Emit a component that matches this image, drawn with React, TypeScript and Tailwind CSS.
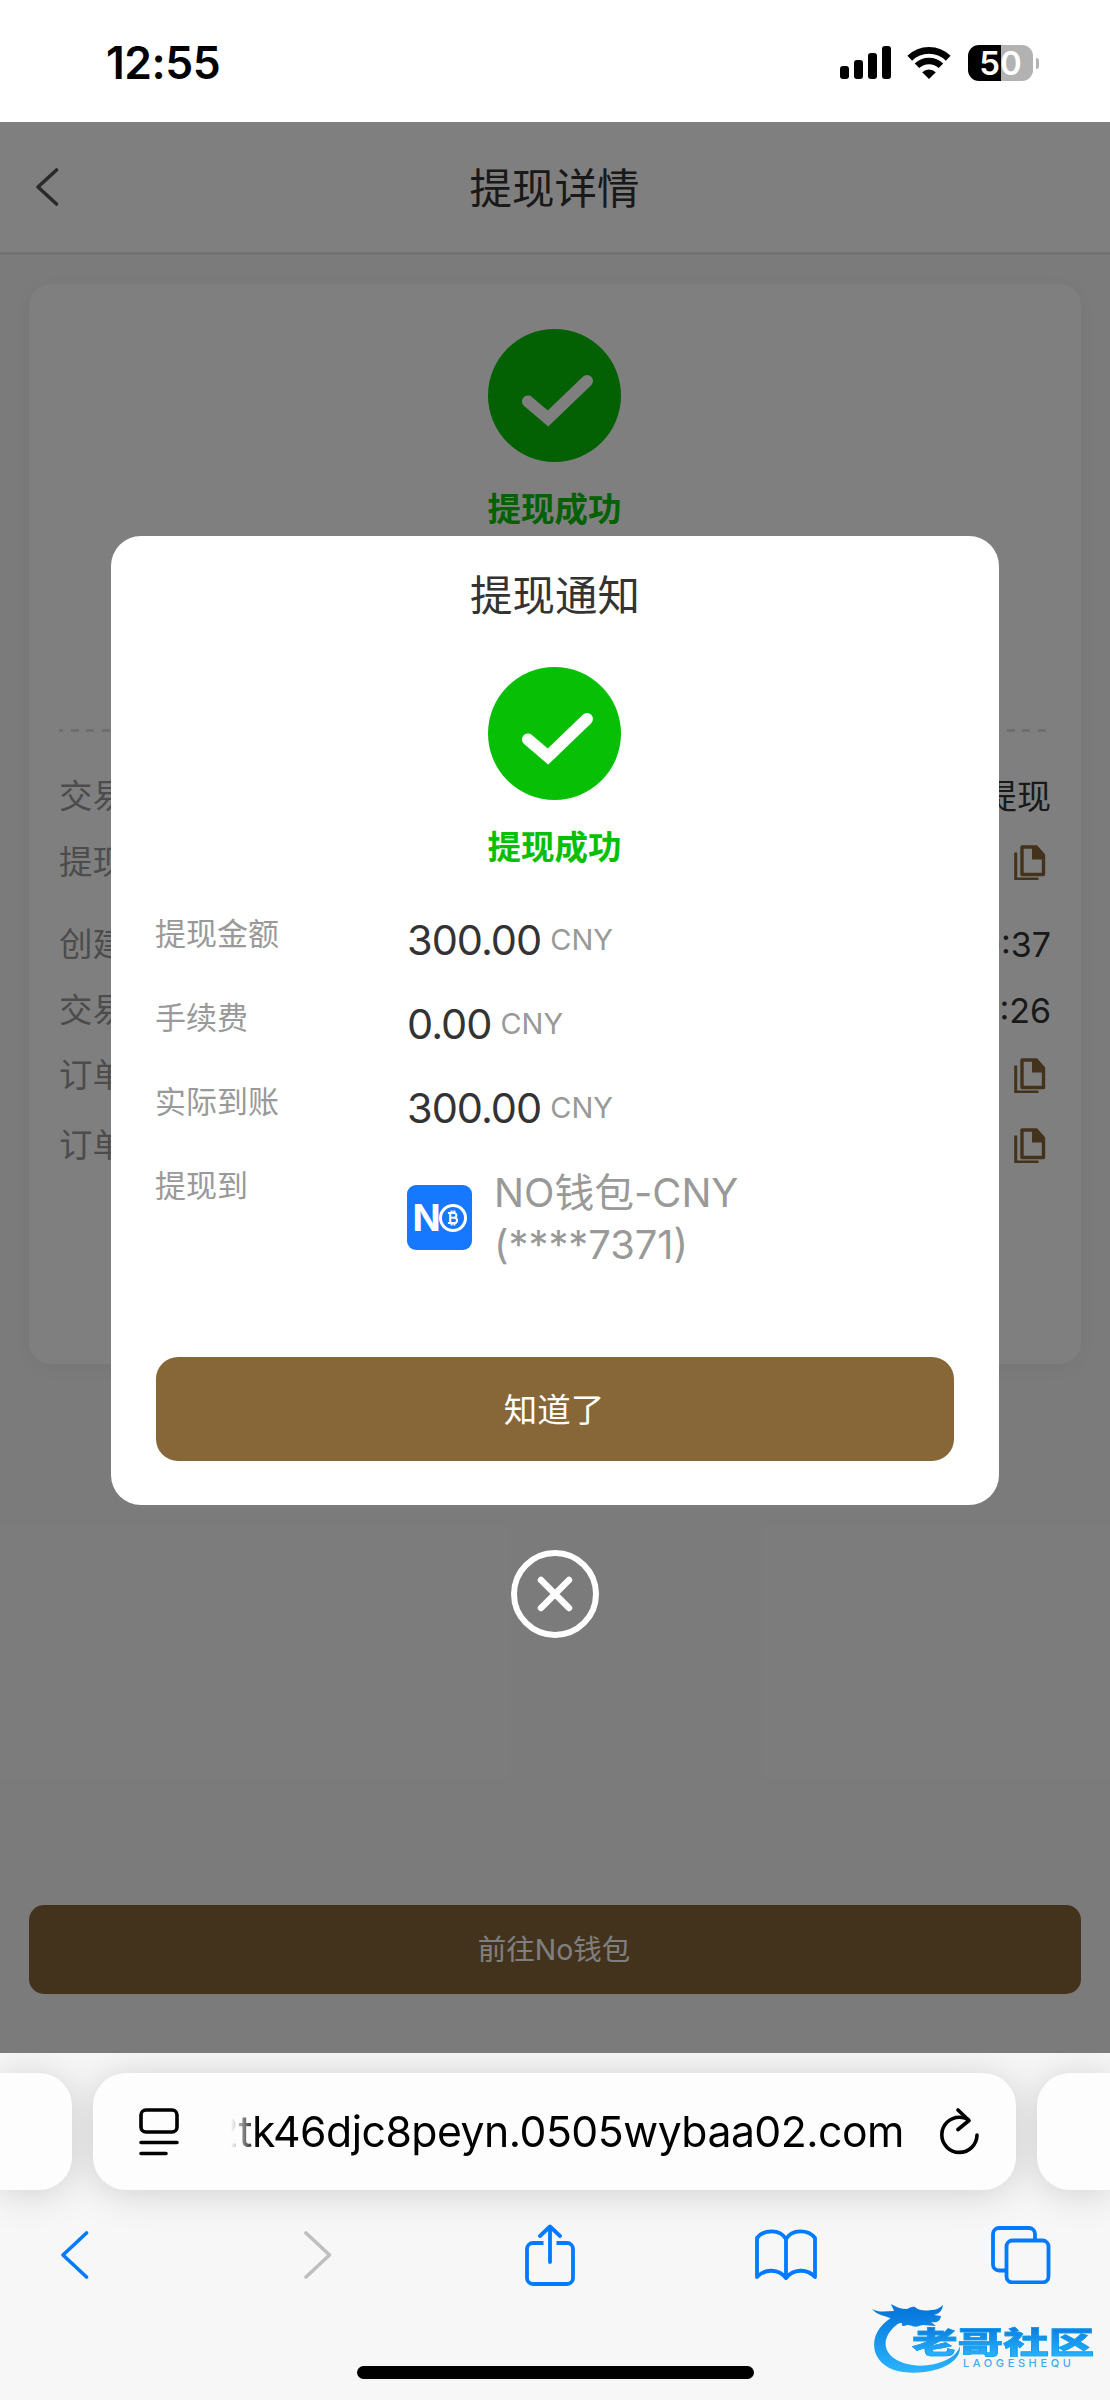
import React, { useState } from "react";

type DetailRow = {
  label: string;
  value?: string;
  copy?: boolean;
  className: string;
};

type AmountRow = {
  label: string;
  amount: string;
};

const detailRows: DetailRow[] = [
  { label: "交易类型", value: "提现", className: "h-[66px]" },
  { label: "提现到", copy: true, className: "h-[74px] pb-[7px]" },
  { label: "创建时间", value: "12:50:37", className: "h-[74px] pt-[8px]" },
  { label: "交易时间", value: "12:54:26", className: "h-[66px]" },
  { label: "订单号", copy: true, className: "h-[66px] pb-px" },
  { label: "订单号", copy: true, className: "h-[70px] pt-[3px]" },
];

const amountRows: AmountRow[] = [
  { label: "提现金额", amount: "300.00" },
  { label: "手续费", amount: "0.00" },
  { label: "实际到账", amount: "300.00" },
];

function StatusBar() {
  return (
    <div className="flex h-[122px] items-center justify-between bg-white pl-[106px] pr-[71px] pt-[4px]">
      <span className="text-[44.5px] font-semibold leading-none tracking-[-0.5px] text-black">12:55</span>
      <div className="flex items-center">
        <svg width="52" height="34" viewBox="0 0 52 34" fill="#000">
          <rect x="0" y="20" width="9" height="13" rx="3" />
          <rect x="14" y="14" width="9" height="19" rx="3" />
          <rect x="28" y="7" width="9" height="26" rx="3" />
          <rect x="42" y="0" width="9" height="33" rx="3" />
        </svg>
        <svg className="ml-[15px]" width="44" height="34" viewBox="0 0 44 34" fill="none" stroke="#000">
          <path d="M2.8 12.2a27.5 27.5 0 0 1 38.4 0" strokeWidth="6.8" />
          <path d="M10 19.8a17.3 17.3 0 0 1 24 0" strokeWidth="6.4" />
          <path d="M22 33l-6.800-6.800a9.800 9.800 0 0 1 13.600 0z" fill="#000" stroke="none" />
        </svg>
        <div className="ml-[17px] flex h-[36px] w-[65px] items-center justify-center rounded-[11px] bg-[linear-gradient(90deg,#000_51%,#b2b2b2_51%)] text-[33px] font-semibold leading-none text-white">
          50
        </div>
        <div className="ml-[3px] h-[11px] w-[3px] rounded-r-full bg-[#b2b2b2]" />
      </div>
    </div>
  );
}

function SuccessMark() {
  return (
    <svg className="-ml-px" width="133" height="133" viewBox="0 0 133 133" fill="none">
      <circle cx="66.5" cy="66.5" r="66.5" fill="#07c006" />
      <path d="M40 72.500L60 89.500L99 52" stroke="#fff" strokeWidth="12" strokeLinecap="round" strokeLinejoin="miter" />
    </svg>
  );
}

function CopyIcon() {
  return (
    <svg className="mr-[5px]" width="32" height="35" viewBox="0 0 32 35" fill="none" stroke="#876638">
      <path d="M8 2h14.500L29.500 10v19.500H8z" strokeWidth="3.400" strokeLinejoin="round" />
      <path d="M18 1.500h5L30.500 10v4.500H18z" fill="#876638" stroke="none" />
      <path d="M1.700 7.500v26.500H24.500" strokeWidth="3" />
    </svg>
  );
}

function WalletLogo() {
  return (
    <div className="flex h-[65px] w-[65px] shrink-0 items-center justify-center rounded-[9px] bg-[#1677ff]">
      <span className="text-[37px] font-bold leading-none text-white">N</span>
      <span className="-ml-[2px] flex h-[28px] w-[28px] shrink-0 items-center justify-center rounded-full border-[3.500px] border-white">
        <svg className="shrink-0" width="12" height="16" viewBox="0 0 13 16" fill="none" stroke="#fff" strokeWidth="2.200">
          <path d="M1 2.500h6.500a2.600 2.600 0 0 1 0 5.300H3.500M3.500 7.800H8a2.800 2.800 0 0 1 0 5.700H1M3.500 2.500v11M5 0v2.500M8 0v2.500M5 13.500V16M8 13.500V16" />
        </svg>
      </span>
    </div>
  );
}

function DetailPage() {
  return (
    <div className="flex h-full flex-col bg-[#f7f7f7]">
      <header className="flex h-[133px] shrink-0 items-center border-b-[3px] border-[#e6e6e6] bg-white px-[35px]">
        <svg width="24" height="38" viewBox="0 0 24 38" fill="none" stroke="#555" strokeWidth="3.600">
          <path d="M21.500 2L3 19l18.500 17" strokeLinecap="round" strokeLinejoin="round" />
        </svg>
        <h1 className="flex-1 pr-[25px] pt-[4px] text-center text-[42.500px] leading-none text-[#333]">提现详情</h1>
      </header>

      <section className="mx-[29px] mt-[29px] flex h-[1080px] shrink-0 flex-col items-center rounded-[22px] bg-white px-[30px] pt-[45px] shadow-[0_4px_24px_rgba(0,0,0,0.05)]">
        <SuccessMark />
        <p className="-ml-px mt-[30px] text-[33.500px] font-bold leading-[34px] text-[#07c006]">提现成功</p>
        <div className="mt-[203px] h-[3px] w-full shrink-0 bg-[repeating-linear-gradient(90deg,#dcdcdc_0,#dcdcdc_4px,transparent_4px,transparent_11.500px,#dcdcdc_11.500px,#dcdcdc_15.600px)]" />
        <div className="mt-[31px] w-full">
          {detailRows.map((row, idx) => (
            <div key={idx} className={`flex items-center justify-between text-[33.500px] ${row.className}`}>
              <span className="text-[#999]">{row.label}</span>
              {row.copy ? <CopyIcon /> : <span className="text-[34px] text-[#333]">{row.value}</span>}
            </div>
          ))}
        </div>
      </section>

      <button className="mx-[29px] mb-[59px] mt-auto h-[89px] shrink-0 rounded-[15px] bg-[#876638] pr-[2px] pt-px text-[28.500px] text-white">前往No钱包</button>
    </div>
  );
}

function NoticeDialog({ onClose }: { onClose: () => void }) {
  return (
    <div className="absolute inset-0 flex flex-col items-center bg-black/50 pt-[414px]">
      <div className="flex h-[969px] w-[888px] flex-col items-center rounded-[30px] bg-white px-[45px] pb-[44px] pt-[38px]">
        <h2 className="text-[42.500px] leading-[44px] text-[#333]">提现通知</h2>
        <div className="mt-[49px]">
          <SuccessMark />
        </div>
        <p className="-ml-px mt-[30px] text-[33.500px] font-bold leading-[34px] text-[#07c006]">提现成功</p>

        <div className="mt-[40px] w-full">
          {amountRows.map((row) => (
            <div key={row.label} className="flex h-[84px] items-start">
              <span className="-ml-[1px] w-[252px] pt-[13px] text-[31px] leading-[34px] text-[#999]">{row.label}</span>
              <span className="flex items-start pt-[10px]">
                <span className="text-[41.500px] leading-[52px] tracking-[-1px] text-[#333]">{row.amount}</span>
                <span className="ml-[9px] text-[29px] leading-[51px] text-[#999]">CNY</span>
              </span>
            </div>
          ))}
          <div className="flex items-start">
            <span className="-ml-[1px] w-[252px] pt-[13px] text-[31px] leading-[34px] text-[#999]">提现到</span>
            <div className="flex items-start pt-[10px]">
              <div className="pt-[19px]">
                <WalletLogo />
              </div>
              <p className="ml-[22px] pt-[1px] text-[39.800px] leading-[52px] text-[#999]">
                NO钱包-CNY
                <br />
                (****7371)
              </p>
            </div>
          </div>
        </div>

        <button className="mt-auto h-[104px] w-full shrink-0 rounded-[22px] bg-[#876638] pr-[2px] pt-[3px] text-[33.500px] text-white" onClick={onClose}>
          知道了
        </button>
      </div>

      <button className="mt-[45px]" onClick={onClose}>
        <svg width="88" height="88" viewBox="0 0 88 88" fill="none" stroke="#fff" strokeWidth="6">
          <circle cx="44" cy="44" r="41" />
          <path d="M30 30l28 28M58 30l-28 28" strokeWidth="6.500" strokeLinecap="round" />
        </svg>
      </button>
    </div>
  );
}

function CommunityMark() {
  return (
    <div className="absolute bottom-[24px] right-[14px] h-[76px] w-[226px]">
      <svg width="226" height="76" viewBox="0 0 226 76" fill="none">
        <defs>
          <linearGradient id="ring" x1="0" y1="0" x2="0" y2="76" gradientUnits="userSpaceOnUse">
            <stop offset="0.15" stopColor="#0678dd" />
            <stop offset="1" stopColor="#2db7ff" />
          </linearGradient>
        </defs>
        <path d="M27 15C-2 27-4 60 24 70C50 78 92 68 90 46C86 60 62 68 42 65C10 60 6 34 36 19z" fill="url(#ring)" />
        <path
          d="M0 9c7 4 15 2 22 2-1-3-2-4-3-7 5 3 10 5 16 5 3-1 5-3 8-2 4 4 11 4 16 3 5 0 9-2 12-5-1 7-5 9-9 10l7 1c-1 6-5 7-10 6l5 4c-8 0-12-2-17 0-5 2-7-1-12-1-4 2-6 1-5-2-5 0-9 2-13 3 1-5 3-7 1-8-5-2-13-3-18-9z"
          fill="url(#ring)"
          transform="translate(2 0)"
        />
      </svg>
      <span className="absolute left-[42px] top-[25px] origin-left scale-x-[1.52] whitespace-nowrap bg-[linear-gradient(#0678dd,#2db7ff)] bg-clip-text text-[30px] font-black leading-[34px] text-transparent [-webkit-text-stroke:0.600px_#139cef]">
        老哥社区
      </span>
      <span className="absolute left-[93px] top-[57px] text-[11px] font-medium leading-[12px] tracking-[3.600px] text-[#43a9ec]">LAOGESHEQU</span>
    </div>
  );
}

function BrowserBar() {
  return (
    <footer className="relative flex h-[347px] flex-col overflow-hidden bg-[#f7f7f7]">
      <div className="flex shrink-0 gap-[21px] pt-[20px] drop-shadow-[0_3px_18px_rgba(0,0,0,0.16)]">
        <div className="h-[117px] w-[72px] rounded-r-[33px] bg-[#fdfdfd]" />
        <div className="flex h-[117px] w-[923px] items-center rounded-[33px] bg-[#fdfdfd] pl-[46px] pr-[35px]">
          <svg width="40" height="48" viewBox="0 0 40 48" fill="none" stroke="#000" strokeWidth="3.600" strokeLinecap="round">
            <rect x="2" y="2" width="36" height="22" rx="5" />
            <path d="M2 34.500h36M2 45.500h25" />
          </svg>
          <div className="ml-[52px] flex w-[673px] justify-end overflow-hidden whitespace-nowrap text-[42.700px] leading-[56px] tracking-[-0.500px] text-black [mask-image:linear-gradient(90deg,transparent,#000_26px)]">
            2tk46djc8peyn.0505wybaa02.com
          </div>
          <svg className="ml-[36px]" width="40" height="48" viewBox="0 0 40 48" fill="none" stroke="#000" strokeWidth="3.600" strokeLinecap="round" strokeLinejoin="round">
            <path d="M28 11.500C25 9.500 22 9.200 19.500 9.200A17.600 17.600 0 1 0 37 27" />
            <path d="M18 2l11 10.500L18 21.500" />
          </svg>
        </div>
        <div className="h-[117px] w-[73px] shrink-0 rounded-l-[33px] bg-[#fdfdfd]" />
      </div>

      <nav className="flex h-[128px] shrink-0 items-center pl-[60px] pt-px">
        <svg width="30" height="48" viewBox="0 0 30 48" fill="none" stroke="#007aff" strokeWidth="3.600" strokeLinecap="round" strokeLinejoin="round">
          <path d="M26.500 2L3 24l23.500 22" />
        </svg>
        <svg className="ml-[213px]" width="30" height="48" viewBox="0 0 30 48" fill="none" stroke="#bfbfbf" strokeWidth="3.600" strokeLinecap="round" strokeLinejoin="round">
          <path d="M3 2l23.500 22L3 46" />
        </svg>
        <svg className="ml-[192px]" width="50" height="62" viewBox="0 0 50 62" fill="none" stroke="#007aff" strokeWidth="3.800">
          <path d="M18.500 19H8a6 6 0 0 0-6 6v29a6 6 0 0 0 6 6h34a6 6 0 0 0 6-6V25a6 6 0 0 0-6-6H31.500" />
          <path d="M25 38V2.500M15 12l10-9.500L35 12" strokeLinecap="round" strokeLinejoin="round" />
        </svg>
        <svg className="ml-[180px]" width="62" height="52" viewBox="0 0 62 52" fill="none" stroke="#007aff" strokeWidth="3.800" strokeLinejoin="round">
          <path d="M31 10C25 0 9 0 2 9V48C10 39 24 40 31 49C38 40 52 39 60 48V9C53 0 37 0 31 10zM31 10v39" />
        </svg>
        <svg className="ml-[174px]" width="60" height="58" viewBox="0 0 60 58" fill="none" stroke="#007aff" strokeWidth="3.800" strokeLinejoin="round">
          <rect x="15.500" y="14.500" width="42" height="42" rx="6" />
          <path d="M15 44.500H8a6 6 0 0 1-6-6V8a6 6 0 0 1 6-6h30a6 6 0 0 1 6 6v6" />
        </svg>
      </nav>

      <div className="mx-auto mb-[21px] mt-auto h-[13px] w-[397px] rounded-full bg-black" />
      <CommunityMark />
    </footer>
  );
}

export default function App() {
  const [open, setOpen] = useState(true);

  return (
    <div className="flex h-[2400px] w-[1110px] flex-col overflow-hidden font-['Inter','Noto_Sans_CJK_SC',sans-serif]">
      <StatusBar />
      <main className="relative h-[1931px] shrink-0">
        <DetailPage />
        {open ? <NoticeDialog onClose={() => setOpen(false)} /> : null}
      </main>
      <BrowserBar />
    </div>
  );
}
